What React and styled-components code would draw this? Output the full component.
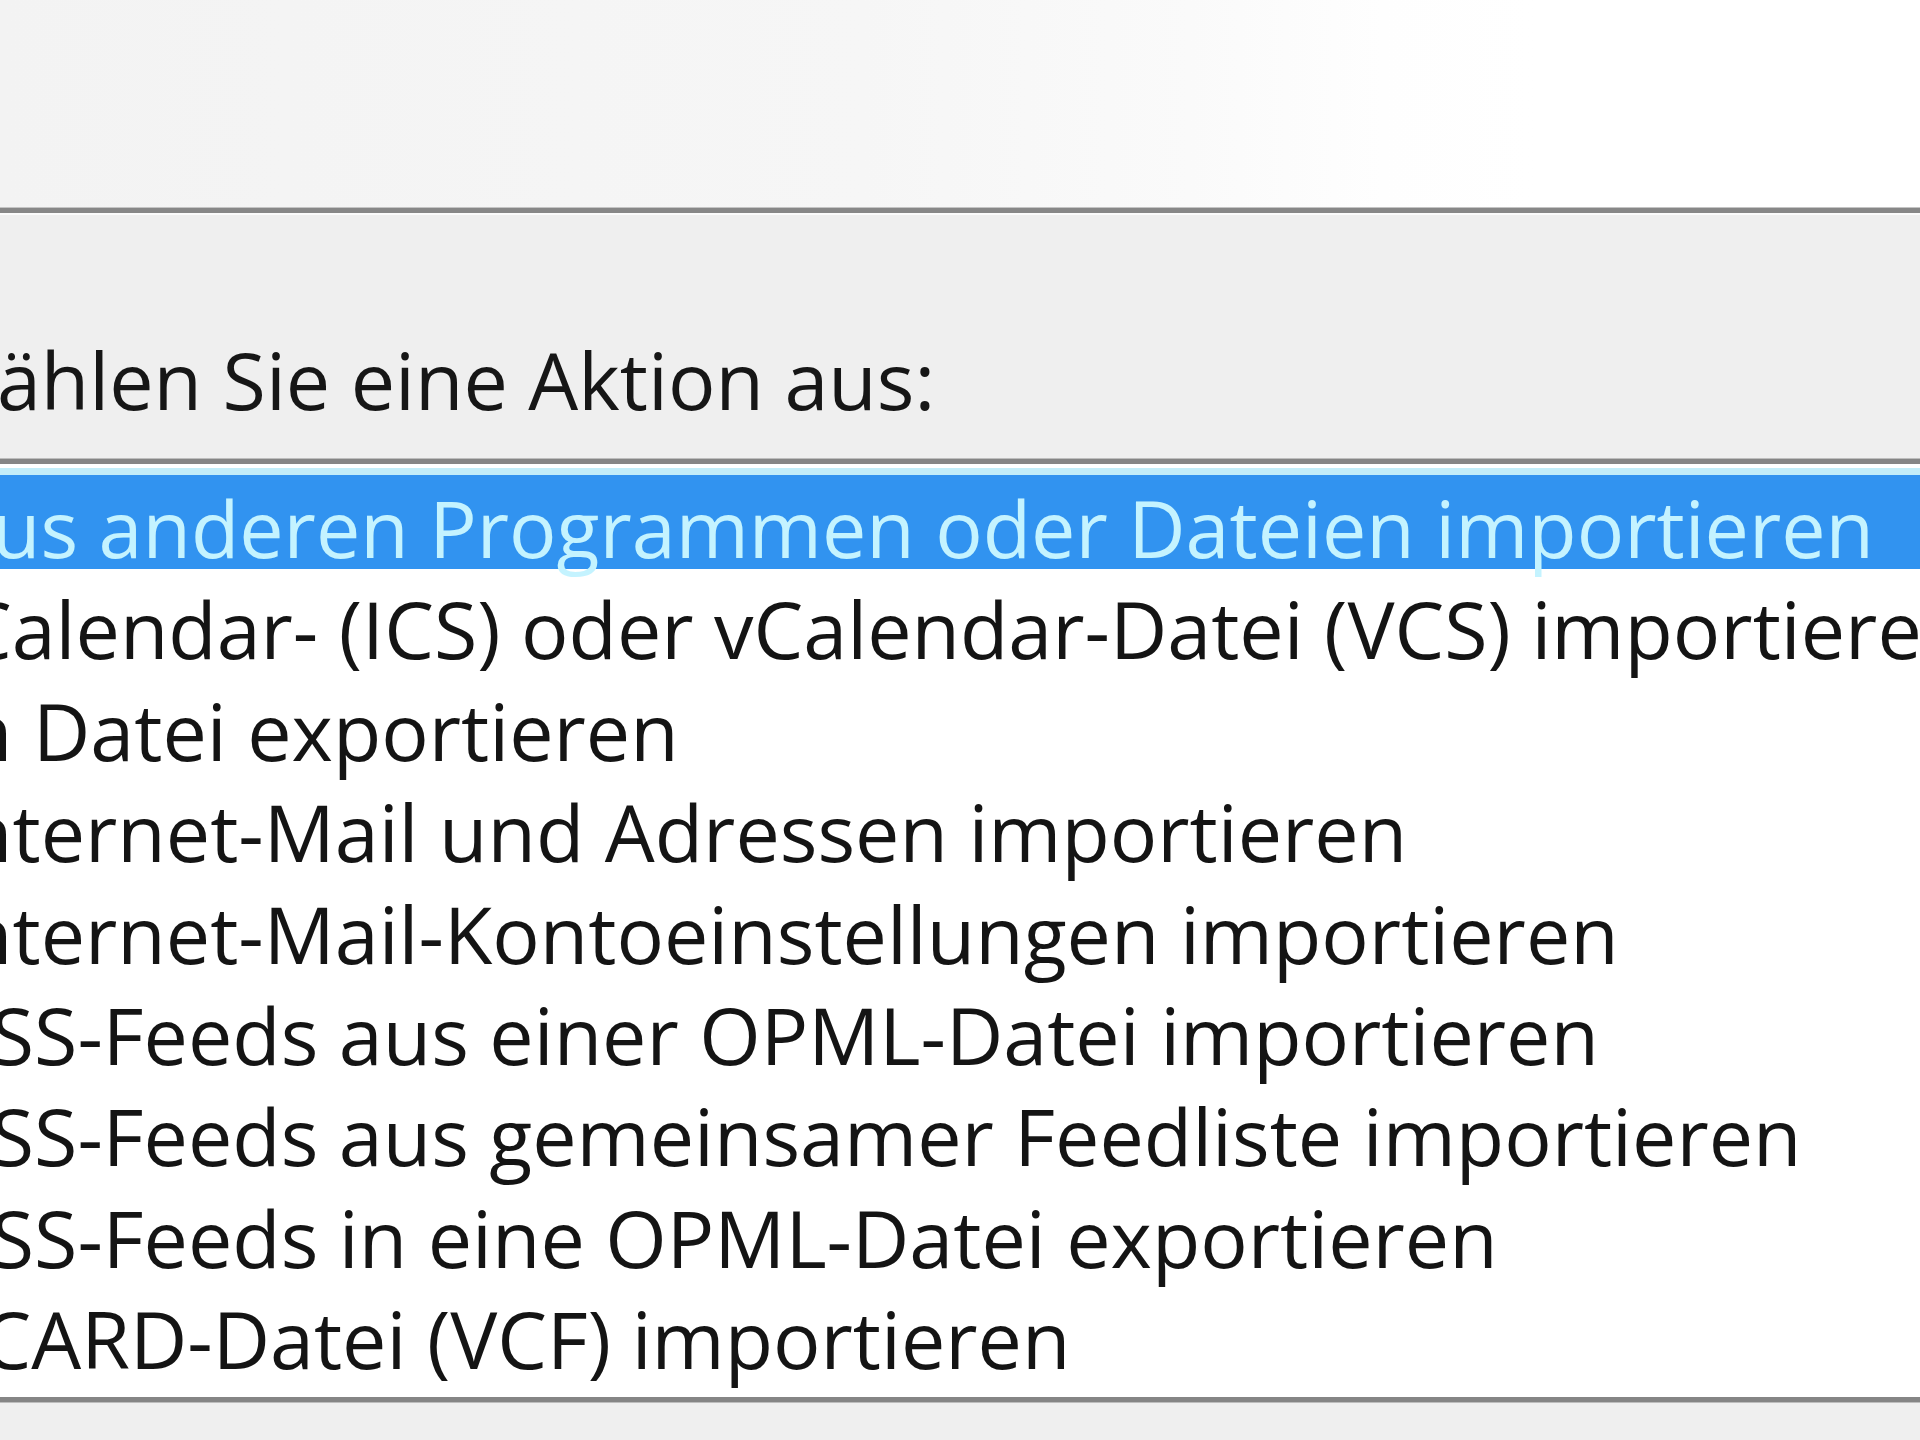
import React from 'react';
import styled, { createGlobalStyle } from 'styled-components';

const GlobalStyle = createGlobalStyle`
  html, body { margin: 0; padding: 0; background: #efefef; overflow: hidden; }
  body { width: 1920px; height: 1440px; font-family: "Open Sans", "Liberation Sans", sans-serif; }
`;

const Window = styled.div`
  display: flex; flex-direction: column; width: 1920px; height: 1440px;
  overflow: hidden; background: #efefef;
`;

const Header = styled.div`
  height: 208px; flex-shrink: 0;
  background: linear-gradient(90deg, #f3f3f3 0%, #f6f6f6 45%, #fafafa 62%, #fefefe 72%, #ffffff 80%);
`;

const Etched = styled.div`
  height: 5px; flex-shrink: 0; background: #878787;
  border-bottom: 2px solid #fbfbfb;
  box-shadow: 0 -1px 0 #c4c4c4;
`;

// the dialog is cropped on the left, so the content starts off-screen
const Panel = styled.div`
  display: flex; flex-direction: column;
  margin: 0 -140px 0 -76px; padding-top: 125px;
`;

const Prompt = styled.div`
  font-size: 79px; line-height: 80px; color: #161616;
  white-space: nowrap;
`;

const ListBox = styled.ul`
  list-style: none; margin: 39px 0 0 0; padding: 4px 0 16px 0;
  background: #fff;
  border-top: 5px solid #858585; border-bottom: 5px solid #858585;
  box-shadow: 0 -1px 0 #bdbdbd, 0 1px 0 #bdbdbd;
`;

const Item = styled.li`
  height: 101.4px; box-sizing: border-box; padding: 20px 0 0 18px;
  font-size: 79px; line-height: 80px; white-space: nowrap;
  color: ${({ $selected }) => ($selected ? '#c4f3ff' : '#141414')};
  background: ${({ $selected }) => ($selected ? '#3193f0' : 'transparent')};
  box-shadow: ${({ $selected }) => ($selected ? 'inset 0 7px 0 #c2edf9' : 'none')};
`;

const actions = [
  'Aus anderen Programmen oder Dateien importieren',
  'iCalendar- (ICS) oder vCalendar-Datei (VCS) importieren',
  'In Datei exportieren',
  'Internet-Mail und Adressen importieren',
  'Internet-Mail-Kontoeinstellungen importieren',
  'RSS-Feeds aus einer OPML-Datei importieren',
  'RSS-Feeds aus gemeinsamer Feedliste importieren',
  'RSS-Feeds in eine OPML-Datei exportieren',
  'vCARD-Datei (VCF) importieren',
];

export default function App() {
  return (
    <Window>
      <GlobalStyle />
      <Header />
      <Etched />
      <Panel>
        <Prompt>Wählen Sie eine Aktion aus:</Prompt>
        <ListBox>
          {actions.map((a, i) => (
            <Item key={a} $selected={i === 0}>{a}</Item>
          ))}
        </ListBox>
      </Panel>
    </Window>
  );
}
